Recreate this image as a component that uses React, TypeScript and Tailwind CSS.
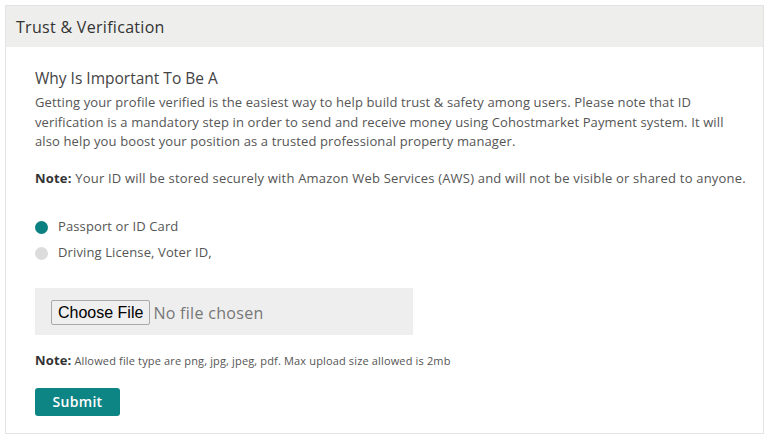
import React from "react";

export default function App() {
  return (
    <div className="w-[768px] h-[441px] bg-white pt-[5px] pl-[5px] tracking-[0.12px]" style={{ fontFamily: '"Open Sans", sans-serif' }}>
      <div className="w-[759px] h-[429px] border border-[#e3e3e3] flex flex-col">
        <div className="h-[41px] bg-[#eeeeec] flex items-center pl-[10px] text-[16px] text-[#333] tracking-[0.3px]">
          Trust &amp; Verification
        </div>
        <div className="pl-[29px] pt-[20px] flex flex-col">
          <div className="text-[15.5px] text-[#444] leading-[22px] tracking-normal">Why Is Important To Be A</div>
          <p className="mt-[4px] text-[13px] leading-[19.5px] text-[#555] whitespace-nowrap">
            Getting your profile verified is the easiest way to help build trust &amp; safety among users. Please note that ID
            <br />
            verification is a mandatory step in order to send and receive money using Cohostmarket Payment system. It will
            <br />
            also help you boost your position as a trusted professional property manager.
          </p>
          <p className="mt-[17px] text-[13px] leading-[19.5px] text-[#555] whitespace-nowrap tracking-[0.2px]">
            <span className="font-bold text-[#333]">Note:</span> Your ID will be stored securely with Amazon Web Services (AWS) and will not be visible or shared to anyone.
          </p>
          <div className="mt-[29px] flex flex-col gap-[6px]">
            <div className="flex items-center h-[20px]">
              <span className="w-[13px] h-[13px] rounded-full bg-[#0b8080]" />
              <span className="ml-[10px] text-[13px] text-[#555]">Passport or ID Card</span>
            </div>
            <div className="flex items-center h-[20px]">
              <span className="w-[13px] h-[13px] rounded-full bg-[#dcdcdc]" />
              <span className="ml-[10px] text-[13px] text-[#555]">Driving License, Voter ID,</span>
            </div>
          </div>
          <div className="mt-[25px] w-[378px] h-[47px] bg-[#eeeeee] flex items-center pl-[16px] pt-[2px]">
            <span
              className="h-[25px] px-[6px] border border-[#a9a9a9] rounded-[2px] bg-[#efefef] flex items-center text-[16px] text-black tracking-normal"
              style={{ fontFamily: '"Liberation Sans", Arial, sans-serif' }}
            >
              Choose File
            </span>
            <span className="ml-[3px] text-[16px] text-[#777] tracking-[0.3px]">No file chosen</span>
          </div>
          <p className="mt-[16px] text-[11px] text-[#555] whitespace-nowrap tracking-[0.15px]">
            <span className="font-bold text-[13px] text-[#333]">Note:</span> Allowed file type are png, jpg, jpeg, pdf. Max upload size allowed is 2mb
          </p>
          <div className="mt-[17px]">
            <button className="w-[85px] h-[28px] rounded-[3px] bg-[#0e8585] text-white text-[14px] font-semibold tracking-[0.3px]">
              Submit
            </button>
          </div>
        </div>
      </div>
    </div>
  );
}
